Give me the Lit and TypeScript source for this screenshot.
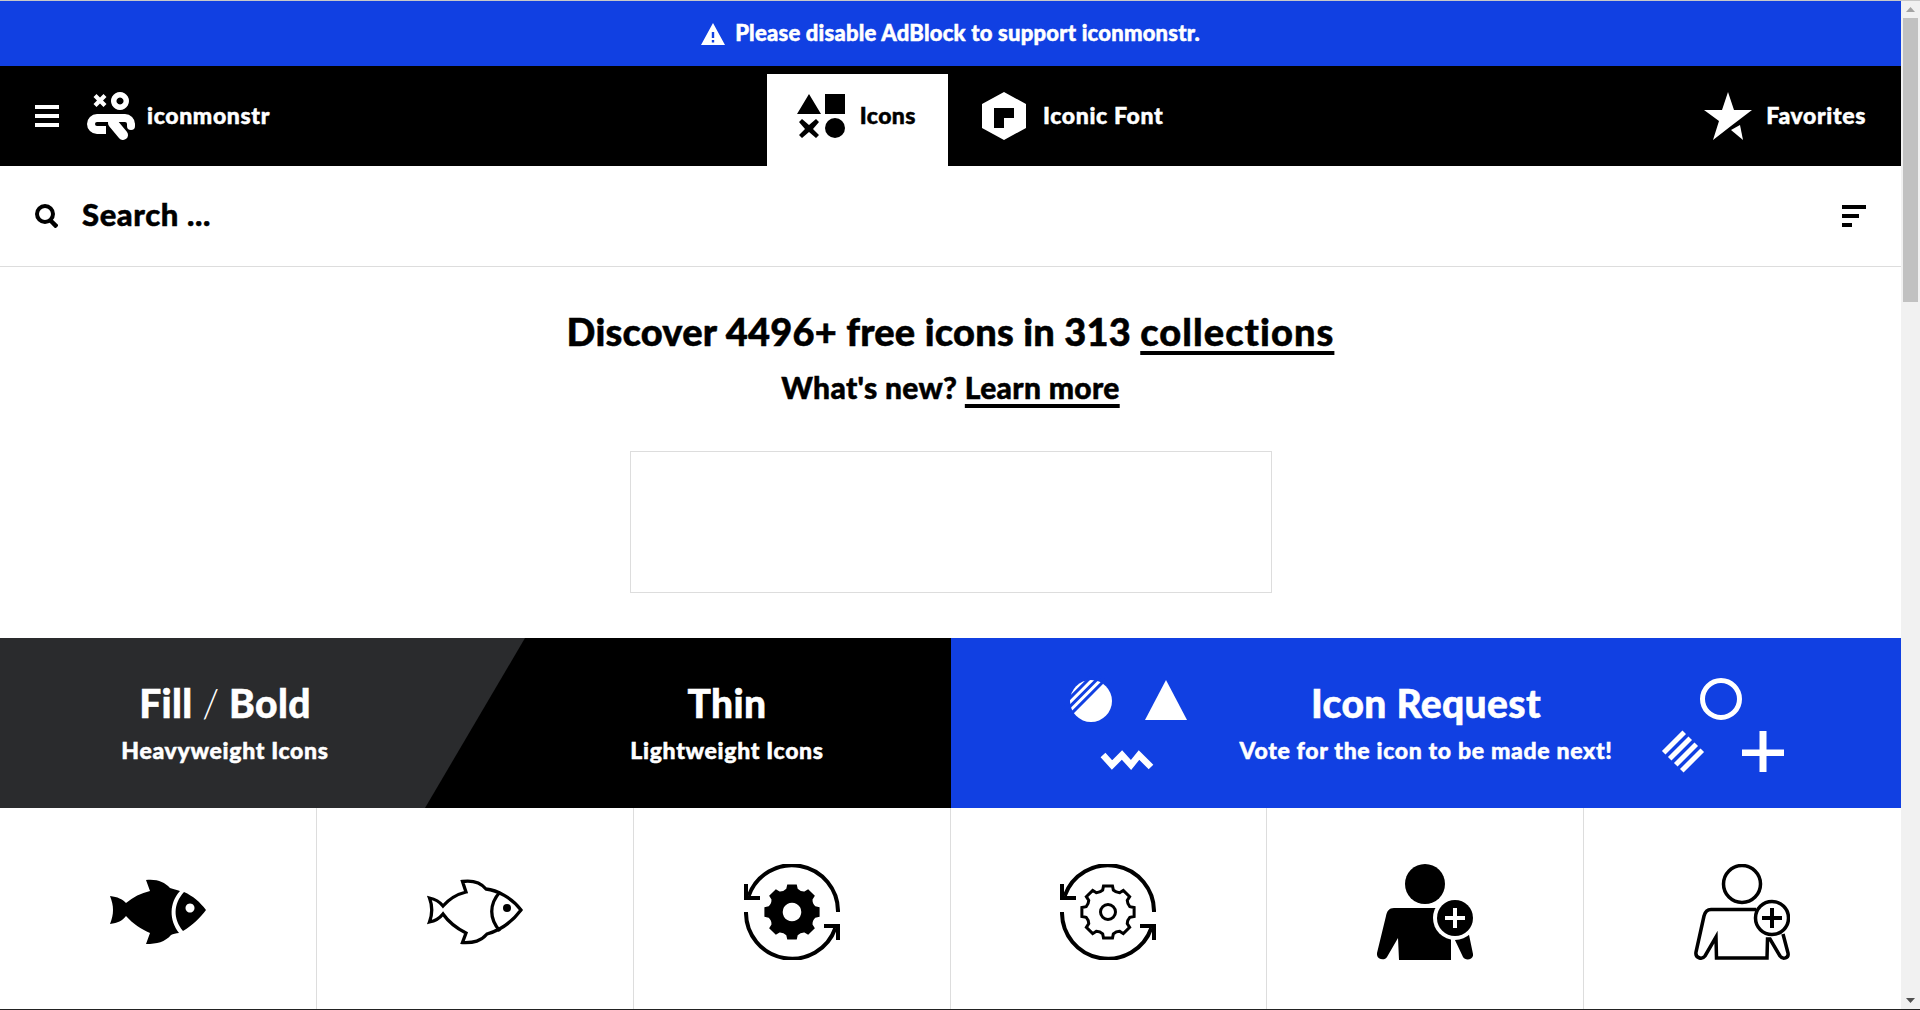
import { LitElement, html, css, svg } from 'lit';
import { customElement } from 'lit/decorators.js';

// eight-tooth gear outline, shared by the filled and the thin icon
const gearPath = (cx: number, cy: number, R: number, r: number) => {
  const p = (a: number, d: number) =>
    `${(cx + Math.cos(a) * d).toFixed(2)} ${(cy + Math.sin(a) * d).toFixed(2)}`;
  const half = 0.17;
  let d = '';
  for (let i = 0; i < 8; i++) {
    const a = (i * Math.PI) / 4 - Math.PI / 2;
    d += `${i ? 'L' : 'M'}${p(a - half, R)} L${p(a + half, R)} `;
    d += `L${p(a + half + 0.07, R - 4)} Q${p(a + Math.PI / 8, r)} ${p(a + Math.PI / 4 - half - 0.07, R - 4)} `;
  }
  return d + 'Z';
};

const arrows = svg`
  <path d="M94 48A46 46 0 0 0 4.6 32M2 48A46 46 0 0 0 91.4 64" fill="none" stroke="#000" stroke-width="4"/>
  <path d="M0 20h4v12h12v4H0zM80 60h16v16h-4V64H80z"/>
`;

const fishFill = svg`
  <path d="M0 32C8 33 12 35 16 39 23 33 31 29 40 27L36 16C48 15 54 18 60 24 63 25 67 26 70 27 59 39 59 56 69 69 66 69 63 70 61 71 55 78 47 80 36 80L40 69C31 65 23 60 16 52 12 57 8 59 0 60 4 50 4 42 0 32Z"/>
  <path fill-rule="evenodd" d="M74 28C83 32 90 38 96 46 90 54 83 61 73 67 63 55 63 40 74 28ZM80 39.500a4.500 4.500 0 1 0 .01 0Z"/>
`;

const fishThin = svg`
  <g fill="none" stroke="#000" stroke-width="3.300" stroke-linejoin="miter">
    <path d="M2.500 34C8 35 12 37 16 42 23 34 31 30 39 28L35.500 17.500C47 16 54 19 59 25 70 26 85 34 94 46 85 58 74 66 60 70 54 77 47 79 35.500 78.500L39 69C31 65 23 60 16 50 12 55 8 57 2.500 58 5.500 50 5.500 42 2.500 34Z"/>
    <path d="M73 28C62 40 62 55 73 67"/>
  </g>
  <circle cx="80" cy="44" r="4"/>
`;

const gearFill = svg`
  ${arrows}
  <path fill-rule="evenodd" d="${gearPath(48, 48, 28, 22)} M48 38.700a9.300 9.300 0 1 0 .01 0Z"/>
`;

const gearThin = svg`
  ${arrows}
  <path d="${gearPath(48, 48, 26.5, 21)}" fill="none" stroke="#000" stroke-width="3"/>
  <circle cx="48" cy="48" r="7.500" fill="none" stroke="#000" stroke-width="3"/>
`;

const personFill = svg`
  <circle cx="48" cy="20" r="20"/>
  <path d="M22 96L21 74 10 93C8 97-1 96 0 89L9 52C10 47 12 44 17 44H74V96Z"/>
  <path d="M77 74L86 93C88 97 97 96 96 90L91 66H70Z"/>
  <circle cx="78" cy="54" r="22" fill="#fff"/>
  <circle cx="78" cy="54" r="18"/>
  <path d="M68 52h8v-8h4v8h8v4h-8v8h-4v-8h-8z" fill="#fff"/>
`;

const personThin = svg`
  <circle cx="48" cy="20" r="18.500" fill="none" stroke="#000" stroke-width="3.500"/>
  <path d="M62 45.500H17C13 45.500 11 48 10 52L2 88C1 94 8 96 11 92L22 73 22.500 94H73L73.500 75H76L86 92C89 96 95 94 94 89L89 70" fill="none" stroke="#000" stroke-width="3.500"/>
  <circle cx="78" cy="54" r="16.500" fill="#fff" stroke="#000" stroke-width="3.500"/>
  <path d="M68 52h8v-8h4v8h8v4h-8v8h-4v-8h-8z"/>
`;

const gridIcons = [fishFill, fishThin, gearFill, gearThin, personFill, personThin];

@customElement('app-root')
export class AppRoot extends LitElement {
  static styles = css`
    :host {
      display: flex;
      flex-direction: column;
      height: 1010px;
      overflow: hidden;
      font-family: Lato, 'Liberation Sans', sans-serif;
      font-weight: 900;
      -webkit-text-stroke: 0.5px currentColor;
      color: #000;
      background: #fff;
    }
    a {
      color: inherit;
      text-decoration: none;
    }
    svg {
      display: block;
      flex: none;
    }
    .edge-top {
      height: 1px;
      background: #c8c8c8;
      flex: none;
    }
    .edge-bottom {
      height: 1px;
      background: #222;
      flex: none;
    }
    .window {
      flex: 1;
      min-height: 0;
      display: flex;
    }
    .page {
      flex: 1;
      min-width: 0;
      overflow: hidden;
    }
    .scrollbar {
      width: 19px;
      flex: none;
      display: flex;
      flex-direction: column;
      align-items: center;
      background: #f1f1f1;
    }
    .scrollbar .thumb {
      width: 15px;
      height: 284px;
      background: #c1c1c1;
    }
    .scrollbar .step {
      height: 17px;
      display: flex;
      align-items: center;
      justify-content: center;
    }
    .scrollbar .spacer {
      flex: 1;
    }
    .notice {
      height: 65px;
      background: #1140e2;
      color: #fff;
      display: flex;
      align-items: center;
      justify-content: center;
      gap: 10px;
      font-size: 22px;
      letter-spacing: 0.22px;
    }
    .nav {
      height: 100px;
      background: #000;
      color: #fff;
      display: grid;
      grid-template-columns: 948px 1fr;
      font-size: 23px;
      letter-spacing: 0.65px;
    }
    .nav-half {
      display: flex;
      align-items: center;
      justify-content: space-between;
    }
    .label {
      padding-bottom: 2px;
    }
    .brand {
      display: flex;
      align-items: center;
      padding-left: 35px;
    }
    .brand .logo {
      margin-left: 28px;
      margin-right: 12px;
    }
    .tab {
      display: flex;
      align-items: center;
      gap: 17px;
      padding: 0 32px 0 34px;
    }
    .tab.active {
      align-self: flex-end;
      height: 92px;
      box-sizing: border-box;
      background: #fff;
      color: #000;
      gap: 15px;
      padding: 0 32px 8px 30px;
      letter-spacing: 0.45px;
    }
    .favorites {
      display: flex;
      align-items: center;
      gap: 14px;
      padding-right: 35px;
    }
    .search {
      height: 100px;
      border-bottom: 1px solid #ddd;
      display: flex;
      align-items: center;
      justify-content: space-between;
      padding: 0 35px;
    }
    .search-field {
      display: flex;
      align-items: center;
      gap: 24px;
      font-size: 31px;
      letter-spacing: 0.6px;
    }
    .search-field .label {
      padding-bottom: 4px;
    }
    .sort {
      display: flex;
      flex-direction: column;
      gap: 5px;
    }
    .sort span {
      display: block;
      height: 4px;
      background: #000;
    }
    .hero {
      padding-top: 39px;
      text-align: center;
    }
    .hero h1 {
      margin: 0;
      font-size: 38px;
      line-height: 50px;
      font-weight: 900;
      letter-spacing: 0.21px;
    }
    .hero h1 a {
      letter-spacing: 1.05px;
    }
    .hero h2 {
      margin: 11px 0 0;
      font-size: 30px;
      line-height: 40px;
      font-weight: 900;
      letter-spacing: 0.33px;
    }
    .hero a {
      text-decoration: underline;
      text-decoration-thickness: 4px;
      text-underline-offset: 5px;
    }
    .ad {
      width: 642px;
      height: 142px;
      box-sizing: border-box;
      border: 1px solid #ddd;
      margin: 44px auto 45px;
    }
    .banners {
      display: grid;
      grid-template-columns: 951px 1fr;
      height: 170px;
      color: #fff;
    }
    .weights {
      position: relative;
      display: flex;
      background: #000;
    }
    .weights::before {
      content: '';
      position: absolute;
      inset: 0;
      background: #2a2b2d;
      clip-path: polygon(0 0, 525px 0, 425px 100%, 0 100%);
    }
    .banner {
      position: relative;
      display: flex;
      flex-direction: column;
      align-items: center;
      justify-content: center;
      gap: 9px;
      padding-bottom: 4px;
      box-sizing: border-box;
    }
    .banner b {
      font-size: 39px;
      line-height: 48px;
      font-weight: 900;
      letter-spacing: 0.35px;
    }
    .banner b i {
      font-style: normal;
      font-weight: 300;
      -webkit-text-stroke: 0;
    }
    .banner span {
      font-size: 23px;
      line-height: 28px;
      letter-spacing: 0.68px;
    }
    .banner.fill {
      width: 450px;
    }
    .banner.thin {
      flex: 1;
      padding-left: 53px;
    }
    .banner.request {
      background: #1140e2;
    }
    .banner.request svg {
      position: absolute;
      inset: 0;
    }
    .grid {
      display: grid;
      grid-template-columns: repeat(6, 1fr);
    }
    .cell {
      display: flex;
      justify-content: center;
      padding: 56px 0;
      border-right: 1px solid #ddd;
    }
    .cell:last-child {
      border-right-color: transparent;
    }
  `;

  render() {
    return html`
      <div class="edge-top"></div>
      <div class="window">
        <div class="page">
          <div class="notice">
            <svg width="24" height="22" viewBox="0 0 24 22">
              <path fill-rule="evenodd" fill="#fff" d="M12 0L24 22H0ZM10.800 9v6h2.400V9ZM10.800 17v2.400h2.400V17Z" />
            </svg>
            <span class="label">Please disable AdBlock to support iconmonstr.</span>
          </div>

          <nav class="nav">
            <div class="nav-half">
              <a class="brand" href="#">
                <svg width="24" height="22" viewBox="0 0 24 22" fill="#fff">
                  <path d="M0 0h24v4H0zM0 9h24v4H0zM0 18h24v4H0z" />
                </svg>
                <svg class="logo" width="48" height="48" viewBox="0 0 48 48" fill="#fff">
                  <path d="M9.500 2l3.500 3.500L16.500 2l3 3-3.500 3.500 3.500 3.500-3 3-3.500-3.500L9.500 15l-3-3L10 8.500 6.500 5z" />
                  <path fill-rule="evenodd" d="M33 0a9 9 0 1 1-.01 0ZM33 5.500a3.500 3.500 0 1 0 .01 0Z" />
                  <path d="M19 38H10A6 6 0 0 1 10 26H38A6 6 0 0 1 44 32V34" fill="none" stroke="#fff" stroke-width="8" />
                  <circle cx="44" cy="34" r="4" />
                  <path d="M26 31L36 43" fill="none" stroke="#fff" stroke-width="10" stroke-linecap="round" />
                </svg>
                <span class="label">iconmonstr</span>
              </a>
              <a class="tab active" href="#">
                <svg width="48" height="44" viewBox="0 0 48 44">
                  <path d="M12 0L24 20H0zM28 0h20v20H28z" />
                  <path d="M5 25l7 6 7-6 3 3-6 7 6 6-3 3-7-6-7 6-3-3 6-6-6-7z" />
                  <circle cx="38" cy="34" r="10" />
                </svg>
                <span class="label">Icons</span>
              </a>
            </div>
            <div class="nav-half">
              <a class="tab" href="#">
                <svg width="44" height="48" viewBox="0 0 44 48">
                  <path fill="#fff" fill-rule="evenodd" d="M22 0L44 12V36L22 48 0 36V12ZM12 16V36H22V26H32V16Z" />
                </svg>
                <span class="label">Iconic Font</span>
              </a>
              <a class="favorites" href="#">
                <svg width="48" height="48" viewBox="0 0 48 48" fill="#fff">
                  <path d="M24 0L30 18H48L27 34 9 48 15 29 0 18H18Z" />
                  <path d="M27 38L36 33 39 48Z" />
                </svg>
                <span class="label">Favorites</span>
              </a>
            </div>
          </nav>

          <div class="search">
            <div class="search-field">
              <svg width="23" height="24" viewBox="0 0 23 24" fill="none" stroke="#000">
                <circle cx="10" cy="10" r="8" stroke-width="4" />
                <path d="M15 16L22 23" stroke-width="4.500" />
              </svg>
              <span class="label">Search ...</span>
            </div>
            <div class="sort">
              <span style="width:24px"></span>
              <span style="width:17px"></span>
              <span style="width:10px"></span>
            </div>
          </div>

          <section class="hero">
            <h1>Discover 4496+ free icons in 313 <a href="#">collections</a></h1>
            <h2>What's new? <a href="#">Learn more</a></h2>
            <div class="ad"></div>
          </section>

          <section class="banners">
            <div class="weights">
              <a class="banner fill" href="#"><b>Fill <i>/</i> Bold</b><span>Heavyweight Icons</span></a>
              <a class="banner thin" href="#"><b>Thin</b><span>Lightweight Icons</span></a>
            </div>
            <a class="banner request" href="#">
              <svg width="950" height="170" viewBox="951 638 950 170" fill="#fff">
                <circle cx="1091" cy="701" r="21" />
                <g transform="translate(1091 701) rotate(-45)">
                  <path d="M-25-5H25M-25-11H25M-25-17H25" stroke="#1140e2" stroke-width="3" />
                </g>
                <path d="M1166 680l21 40h-42z" />
                <path d="M1103 755l9 10 10-10 9 10 8-10 12 12" fill="none" stroke="#fff" stroke-width="6.500" />
                <circle cx="1721" cy="699" r="18.500" fill="none" stroke="#fff" stroke-width="5" />
                <path d="M1759.500 731h7v18.500H1784v6.500h-17.500V772h-7v-16H1742v-6.500h17.500z" />
                <g transform="translate(1683 751.500) rotate(-45)">
                  <path d="M-14.500-12.750H14.500M-14.500-4.250H14.500M-14.500 4.250H14.500M-14.500 12.750H14.500" stroke="#fff" stroke-width="5" />
                </g>
              </svg>
              <b>Icon Request</b>
              <span>Vote for the icon to be made next!</span>
            </a>
          </section>

          <section class="grid">
            ${gridIcons.map(
              (icon) => html`
                <a class="cell" href="#">
                  <svg width="96" height="96" viewBox="0 0 96 96">${icon}</svg>
                </a>
              `
            )}
          </section>
        </div>

        <div class="scrollbar">
          <div class="step">
            <svg width="9" height="5" viewBox="0 0 9 5"><path d="M4.500 0L9 5H0z" fill="#a3a3a3" /></svg>
          </div>
          <div class="thumb"></div>
          <div class="spacer"></div>
          <div class="step">
            <svg width="9" height="5" viewBox="0 0 9 5"><path d="M0 0h9L4.500 5z" fill="#505050" /></svg>
          </div>
        </div>
      </div>
      <div class="edge-bottom"></div>
    `;
  }
}

declare global {
  interface HTMLElementTagNameMap {
    'app-root': AppRoot;
  }
}
